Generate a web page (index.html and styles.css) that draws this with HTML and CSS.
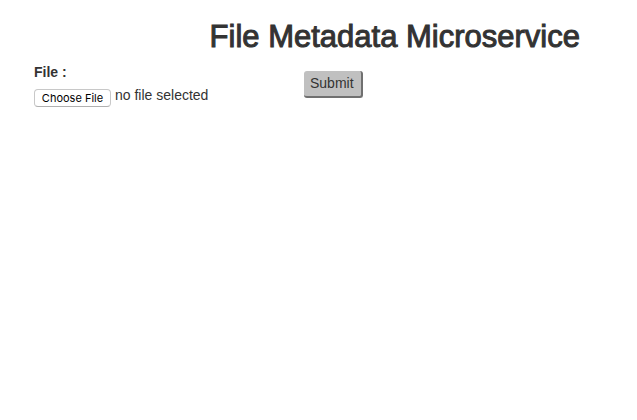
FILE: index.html
```
<!DOCTYPE html>
<html lang="en">
<head>
  <meta charset="utf-8">
  <title>File Metadata Microservice</title>
  <link rel="stylesheet" href="styles.css">
</head>
<body>
  <h1 class="title">File Metadata Microservice</h1>
  <form class="upload">
    <div class="field">
      <label class="field-label" for="file">File :</label>
      <div class="picker">
        <input class="file-input" type="file" id="file" name="file">
        <span class="file-status">no file selected</span>
      </div>
    </div>
    <button class="submit" type="submit">Submit</button>
  </form>
</body>
</html>
```
FILE: styles.css
```
* {
  box-sizing: border-box;
}

body {
  margin: 0;
  padding: 20px 32px 0 34px;
  background: #fff;
  color: #333;
  font-family: "Liberation Sans", Arial, sans-serif;
  font-size: 14px;
  line-height: 20px;
}

.title {
  margin: 0 25px 8px 0;
  font-size: 31px;
  line-height: 34px;
  font-weight: 400;
  text-align: right;
  -webkit-text-stroke: 1px #333;
}

.upload {
  display: flex;
  align-items: flex-start;
}

.field {
  flex: 0 0 270px;
}

.field-label {
  display: block;
  margin-bottom: 3px;
  font-weight: 700;
}

.picker {
  display: flex;
  gap: 4px;
}

.file-input {
  width: 77px;
  height: 18px;
  margin-top: 4px;
  overflow: hidden;
  color: transparent;
}

.file-input::file-selector-button {
  width: 77px;
  height: 18px;
  margin: 0;
  padding: 0;
  border: 1px solid #c8c8c8;
  border-bottom-color: #b0b0b0;
  border-radius: 4px;
  background: #fff;
  color: #000;
  font: 11px/16px Inter, sans-serif;
}

.submit {
  margin-top: 9px;
  padding: 1px 7px 2px 6px;
  border: solid #707070;
  border-width: 0 2px 2px 0;
  border-radius: 3px;
  background: #c0c0c0;
  color: #333;
  font: inherit;
  line-height: 22px;
}
```
